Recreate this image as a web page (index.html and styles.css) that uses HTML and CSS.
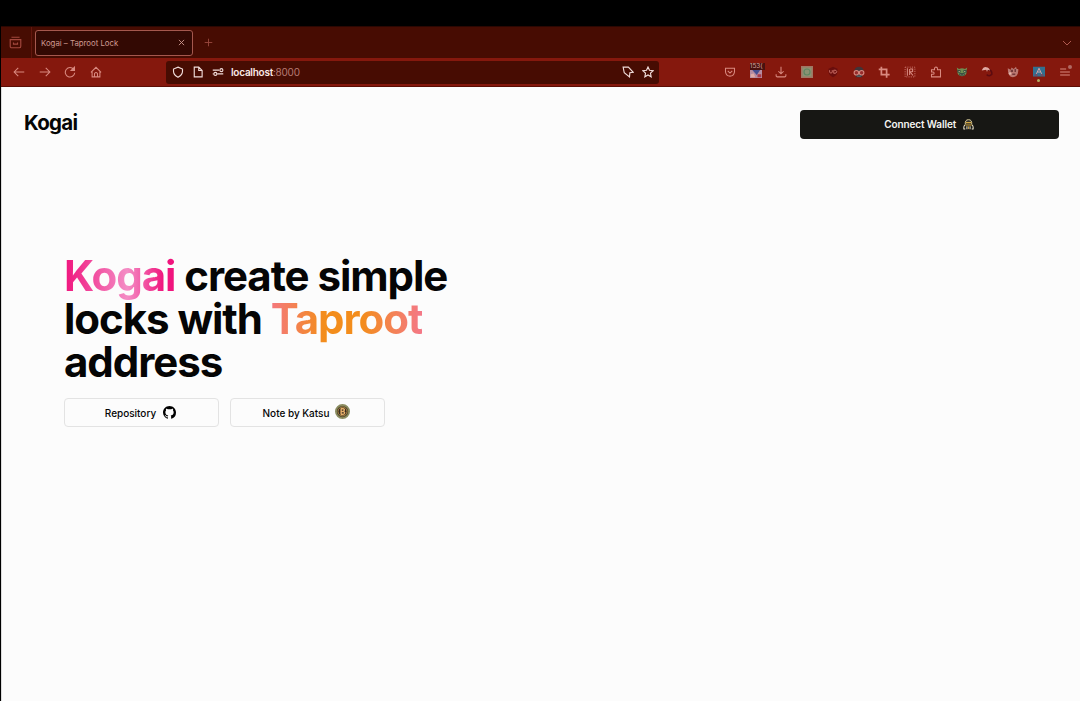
FILE: index.html
```html
<!DOCTYPE html>
<html lang="en">
<head>
<meta charset="utf-8">
<title>Kogai - Taproot Lock</title>
<link rel="stylesheet" href="styles.css">
</head>
<body>
<div class="window">
  <div class="tabbar">
    <div class="tabview"><svg class="ic dim" viewBox="0 0 16 16"><path d="M3 1.500h10M1.500 4.500h13v8q0 2-2 2h-9q-2 0-2-2zM5.500 8v2h5V8"/></svg></div>
    <div class="tab"><span class="tab-title">Kogai – Taproot Lock</span><svg class="close" viewBox="0 0 8 8"><path d="M1 1l6 6M7 1L1 7"/></svg></div>
    <svg class="plus" viewBox="0 0 10 10"><path d="M5 .8v8.4M.8 5h8.400"/></svg>
    <svg class="chev" viewBox="0 0 10 6"><path d="M1 1l4 4 4-4"/></svg>
  </div>
  <div class="toolbar">
    <div class="nav">
      <span class="cell"><svg class="ic" viewBox="0 0 16 16"><path d="M15 8H1.500M7 2.500L1.500 8 7 13.500"/></svg></span>
      <span class="cell"><svg class="ic" viewBox="0 0 16 16"><path d="M1 8h13.500M9 2.500L14.500 8 9 13.500"/></svg></span>
      <span class="cell"><svg class="ic" viewBox="0 0 16 16"><path d="M13 4.500A6.300 6.300 0 1 0 14.300 9"/><path fill="currentColor" d="M14 1.500v4.500H9.500z"/></svg></span>
      <span class="cell"><svg class="ic" viewBox="0 0 16 16"><path d="M1.200 8.500L8 1.800l6.800 6.700M2.800 7v7.500h10.400V7M6 14.500V10q2-2.500 4 0v4.500"/></svg></span>
    </div>
    <div class="urlbar">
      <svg class="uic" viewBox="0 0 16 16"><path d="M8 1.500L14 4v3q0 5-6 8-6-3-6-8V4z"/></svg>
      <svg class="uic" viewBox="0 0 16 16"><path d="M3 1.500h6l4.500 4.500v8.500H3zM9 1.500V6h4.500"/></svg>
      <svg class="uic" viewBox="0 0 16 16"><path d="M1 5.500h8.500M7 10.500h8M1 10.500h1"/><circle cx="12.500" cy="5.500" r="2"/><circle cx="4.500" cy="10.500" r="2"/></svg>
      <span class="url"><b>localhost</b>:8000</span>
      <svg class="uic pointer" viewBox="0 0 16 16"><path d="M1.500 1.500h7L15 8.500l-4.500.5-.5 5.500L3 9z"/></svg>
      <svg class="uic star" viewBox="0 0 16 16"><path d="M8 1.300l2 4.400 4.800.6-3.500 3.300.9 4.800L8 12l-4.200 2.400.9-4.800L1.200 6.300 6 5.700z"/></svg>
    </div>
    <div class="exts">
      <span class="cell"><svg class="ic" viewBox="0 0 16 16"><path d="M2 3h12v5q-1 5.500-6 5.500T2 8zM5 6.500l3 3 3-3"/></svg></span>
      <span class="cell"><svg class="ic full" viewBox="0 0 16 16"><path fill="#b58ba0" d="M0 3h16v13H0z"/><path fill="#454e91" d="M1 3h14L9 12z"/><path fill="#e0aaa4" d="M1 11l4-1 2 5H1z"/><path fill="#a83b4b" d="M10 11h5v4h-5z"/></svg><span class="badge">153(</span></span>
      <span class="cell"><svg class="ic" viewBox="0 0 16 16"><path d="M8 1v9M4.500 7L8 10.500 11.500 7M1.500 11v2q0 1.500 1.500 1.500h10q1.500 0 1.500-1.500v-2"/></svg></span>
      <span class="cell"><svg class="ic full" viewBox="0 0 16 16"><path fill="#a07763" d="M0 0h16v16H0z"/><path fill="#8a9372" d="M2 2h12v12H2z"/><circle cx="8" cy="8" r="4" fill="none" stroke="#5f8661" stroke-width="1.500"/></svg></span>
      <span class="cell"><svg class="ic full" viewBox="0 0 16 16"><path fill="#690e0d" d="M8 1l6 2.500V8q-1 5-6 7-5-2-6-7V3.500z"/><path class="thin" d="M3.500 5.500v3q1.800 2 3.500 0v-3M9 5.500v4.300q4 .3 4-2.200T9 5.500"/></svg></span>
      <span class="cell"><svg class="ic full" viewBox="0 0 16 16"><path fill="#403438" d="M2 7q0-6 6-6t6 6l-2 8H4z"/><circle cx="4.500" cy="9" r="3" fill="#972c2b" stroke="#d5867c" stroke-width="1.500"/><circle cx="11.500" cy="9" r="3" fill="#972c2b" stroke="#d5867c" stroke-width="1.500"/><path fill="#505f62" d="M5 12.500h6l-1 2H6z"/></svg></span>
      <span class="cell"><svg class="ic" viewBox="0 0 16 16"><path stroke-width="2.300" d="M4.500 1v10.500H15.500M1 4.500h10.500V15.500"/></svg></span>
      <span class="cell"><svg class="ic" viewBox="0 0 16 16"><path stroke-width="1" stroke-dasharray="1.500 1.500" d="M1.500 1.500h13v13h-13z"/><path d="M4.500 3v10M7.500 4v8M8 4h3.500v3.500L8 8l4 4.500"/></svg></span>
      <span class="cell"><svg class="ic" viewBox="0 0 16 16"><path d="M2 5h4V3.500q0-2 2-2t2 2V5h4v9.500H2V11h2q1.500 0 1.500-1.500T4 8H2z"/></svg></span>
      <span class="cell"><svg class="ic full" viewBox="0 0 16 16"><path fill="#6f8c52" d="M1 2l3 2q4-2 8 0l3-2-1 4q1 7-6 7.500Q1 13 2 6z"/><path fill="#273f3c" d="M2 5.500h4v3H2zM10 5.500h4v3h-4zM4.500 9.500h7v3h-7z"/><path fill="#d0b98a" d="M3.500 6.500H5V8H3.500zM11 6.500h1.500V8H11zM6 10.500h1v1H6zM9 10.500h1v1H9z"/></svg></span>
      <span class="cell"><svg class="ic full" viewBox="0 0 16 16"><path fill="none" stroke="#5c0b10" stroke-width="2" d="M9 5q6 0 5.500 6-3 3.500-7 .5"/><path fill="#dfaaa3" d="M1 6q2-5 6-4.500Q11 2 12 6L9 5 8 8 7 5z"/></svg></span>
      <span class="cell"><svg class="ic full" viewBox="0 0 16 16"><path fill="#ba7770" d="M1 3l4 2 1-3 3 2 3-3 1 3 2 0q1 10-7 11Q1 15 1 3z"/><path fill="#71393a" d="M5 5h3v3H5zM10 4h2v4h-2zM7 10h4v2H7z"/><circle cx="4" cy="10" r="1.800" fill="#dfb4aa"/></svg></span>
      <span class="cell"><svg class="ic full" viewBox="0 0 16 16"><path fill="#327090" d="M0 1h16v13H0z"/><path fill="none" stroke-width="1.300" d="M4.500 10.500L8 3l3.500 7.500M6 8h4" stroke="#d6a4a6"/><path stroke="#9c3444" d="M2 12h4M10 12h4"/></svg><i class="status"></i></span>
      <span class="cell"><svg class="ic" viewBox="0 0 16 16"><path stroke-width="1.500" d="M1.500 4h8M1.500 8h13M1.500 12h13"/></svg><i class="notice"></i></span>
    </div>
  </div>
  <div class="page">
    <header class="header">
      <div class="brand">Kogai</div>
      <div class="btn connect">Connect Wallet
        <svg class="ghost" viewBox="0 0 12 12"><path fill="#34332c" stroke="#e5d6a2" stroke-width="1" d="M2.500 6Q2 .7 6 .7T9.500 6"/><path fill="none" stroke="#d6aa43" stroke-width="1.200" d="M3 4h6M2.500 6.500h7"/><path fill="none" stroke="#f1ead1" stroke-width="1.100" d="M2 6.500Q.5 8 1 11h1.500M10 6.500Q11.500 8 11 11H9.500M4.300 8v3.200M7.700 8v3.200"/><path stroke="#c9a34a" d="M6 8v3"/></svg>
      </div>
    </header>
    <main class="hero">
      <h1><span class="pink">Kogai</span> create simple<br>locks with <span class="orange">Taproot</span><br>address</h1>
      <div class="actions">
        <div class="btn outline">Repository
          <svg class="github" viewBox="0 0 16 16"><path d="M8 0C3.580 0 0 3.580 0 8c0 3.540 2.290 6.530 5.470 7.590.4.070.55-.17.55-.38 0-.19-.01-.82-.01-1.490-2.010.37-2.530-.49-2.690-.94-.09-.23-.48-.94-.82-1.130-.28-.15-.68-.52-.01-.53.63-.01 1.080.58 1.230.82.72 1.210 1.870.87 2.330.66.070-.52.28-.87.51-1.070-1.780-.2-3.640-.89-3.640-3.950 0-.87.31-1.590.82-2.150-.08-.2-.36-1.020.08-2.120 0 0 .67-.21 2.200.82.640-.18 1.320-.27 2-.27s1.360.09 2 .27c1.530-1.040 2.200-.82 2.200-.82.44 1.100.16 1.920.08 2.120.51.56.82 1.270.82 2.150 0 3.070-1.870 3.750-3.650 3.950.29.25.54.73.54 1.480 0 1.070-.01 1.930-.01 2.200 0 .21.15.46.55.38A8.010 8.010 0 0 0 16 8c0-4.420-3.580-8-8-8z"/></svg>
        </div>
        <div class="btn outline">Note by Katsu
          <svg class="coin" viewBox="0 0 16 16"><circle cx="8" cy="8" r="7" fill="#49442e" stroke="#8b8c60" stroke-width="2"/><circle cx="8" cy="8" r="4.800" fill="#33281e" stroke="#b38a45"/><path fill="none" stroke="#e8b06a" stroke-width="1.500" d="M6.500 5v6M6 5h2.500q2 .2 1.500 1.500T8.500 8H6.500h2q2 .2 1.800 1.600T8.500 11H6M7.500 4v1M7.500 11v1"/></svg>
        </div>
      </div>
    </main>
  </div>
</div>
</body>
</html>
```
FILE: styles.css
```css
* { box-sizing: border-box; }
body {
  margin: 0;
  height: 701px;
  overflow: hidden;
  padding: 26px 0 0 1px;
  background: #000;
  font-family: Inter, "Liberation Sans", sans-serif;
}
.window { height: 675px; display: flex; flex-direction: column; }
svg { display: block; flex: none; fill: none; stroke: currentColor; }
.tabbar {
  height: 32px;
  flex: none;
  display: flex;
  align-items: center;
  background: #470c02;
  border-top: 1px solid #2b0702;
  color: #a75f55;
}
.tabview {
  width: 31px;
  height: 100%;
  padding-left: 8px;
  display: flex;
  align-items: center;
  border-right: 1px solid #63170e;
}
.ic { width: 12px; height: 12px; stroke-width: 1.4; }
.dim { color: #a4483e; }
.tab {
  width: 158px;
  height: 26px;
  margin-left: 3px;
  padding: 0 7px 0 5px;
  display: flex;
  align-items: center;
  justify-content: space-between;
  background: #330903;
  border: 1px solid #a5584e;
  border-radius: 3px;
  color: #d09a91;
}
.tab-title { font-size: 7.8px; letter-spacing: 0; white-space: nowrap; }
.close { width: 7px; height: 7px; }
.plus { width: 9px; height: 9px; margin-left: 11px; stroke-width: 1; color: #98473d; }
.chev { width: 10px; height: 6px; margin: 0 8px 0 auto; color: #b0594f; }
.tabview .ic { width: 13px; height: 13px; }
.toolbar {
  height: 29px;
  flex: none;
  display: flex;
  align-items: center;
  background: #85180d;
  border-bottom: 1px solid #5d0d04;
  color: #d98a80;
}
.nav { display: flex; padding-left: 5px; width: 165px; }
.cell {
  position: relative;
  width: 25.75px;
  display: flex;
  justify-content: center;
}
.urlbar {
  width: 493px;
  height: 23px;
  padding: 0 5px 0 6px;
  display: flex;
  align-items: center;
  gap: 8px;
  background: #470c02;
  border-radius: 3px;
  color: #f1ddda;
}
.uic { width: 12px; height: 12px; stroke-width: 1.5; }
.url { font-size: 10px; color: #b87b73; letter-spacing: -.25px; margin-left: -1px; }
.url b { color: #fae9e6; font-weight: 600; }
.pointer { margin-left: auto; }
.exts { display: flex; margin-left: 58px; }
.full { stroke: none; }
.thin { stroke: #cf7069; stroke-width: 1.200; }
.badge {
  position: absolute;
  left: 7px;
  top: -3px;
  width: 15px;
  height: 7px;
  overflow: hidden;
  background: #48110f;
  color: #d5a19b;
  font-size: 6.5px;
  line-height: 7px;
}
.status, .notice { position: absolute; border-radius: 50%; }
.status { width: 3px; height: 3px; left: 11px; top: 13px; background: #b1af61; }
.notice { width: 4px; height: 4px; right: 6px; top: -1px; background: #b06a62; }
.page { flex: 1; background: #fcfcfc; border-left: 1px solid #ddd; color: #050505; }
.header {
  height: 75px;
  padding: 23px 21.5px 0 22px;
  display: flex;
  align-items: flex-start;
  justify-content: space-between;
}
.brand {
  font-size: 20.5px;
  line-height: 25px;
  font-weight: 700;
  letter-spacing: -.7px;
}
.btn {
  display: flex;
  align-items: center;
  justify-content: center;
  gap: 7px;
  border-radius: 4px;
  font-size: 10px;
  font-weight: 500;
  white-space: nowrap;
}
.connect {
  width: 258.5px;
  height: 28.5px;
  background: #171714;
  color: #f5f5f2;
  font-weight: 600;
  letter-spacing: -.12px;
}
.ghost { width: 11px; height: 11px; stroke: none; }
.hero { padding: 92px 0 0 62px; }
h1 {
  margin: 0;
  font-size: 42px;
  line-height: 43px;
  font-weight: 700;
  letter-spacing: -1.05px;
  white-space: nowrap;
}
.pink, .orange {
  background-clip: text;
  -webkit-background-clip: text;
  color: transparent;
}
.pink { background-image: linear-gradient(90deg, #f0147d, #f48dc5 57%, #f0147d 90%); }
.orange { background-image: linear-gradient(90deg, #f4787e, #f38d1c 35%, #f38d1c 60%, #f47888); }
.actions { display: flex; gap: 11px; margin-top: 15px; }
.outline {
  width: 155px;
  height: 29px;
  padding-right: 2px;
  border: 1px solid #e3e3e3;
  letter-spacing: -.02px;
}
.github { width: 13px; height: 13px; fill: #000; stroke: none; }
.coin { width: 15px; height: 15px; margin: -2px 0 0 -1px; }
```
